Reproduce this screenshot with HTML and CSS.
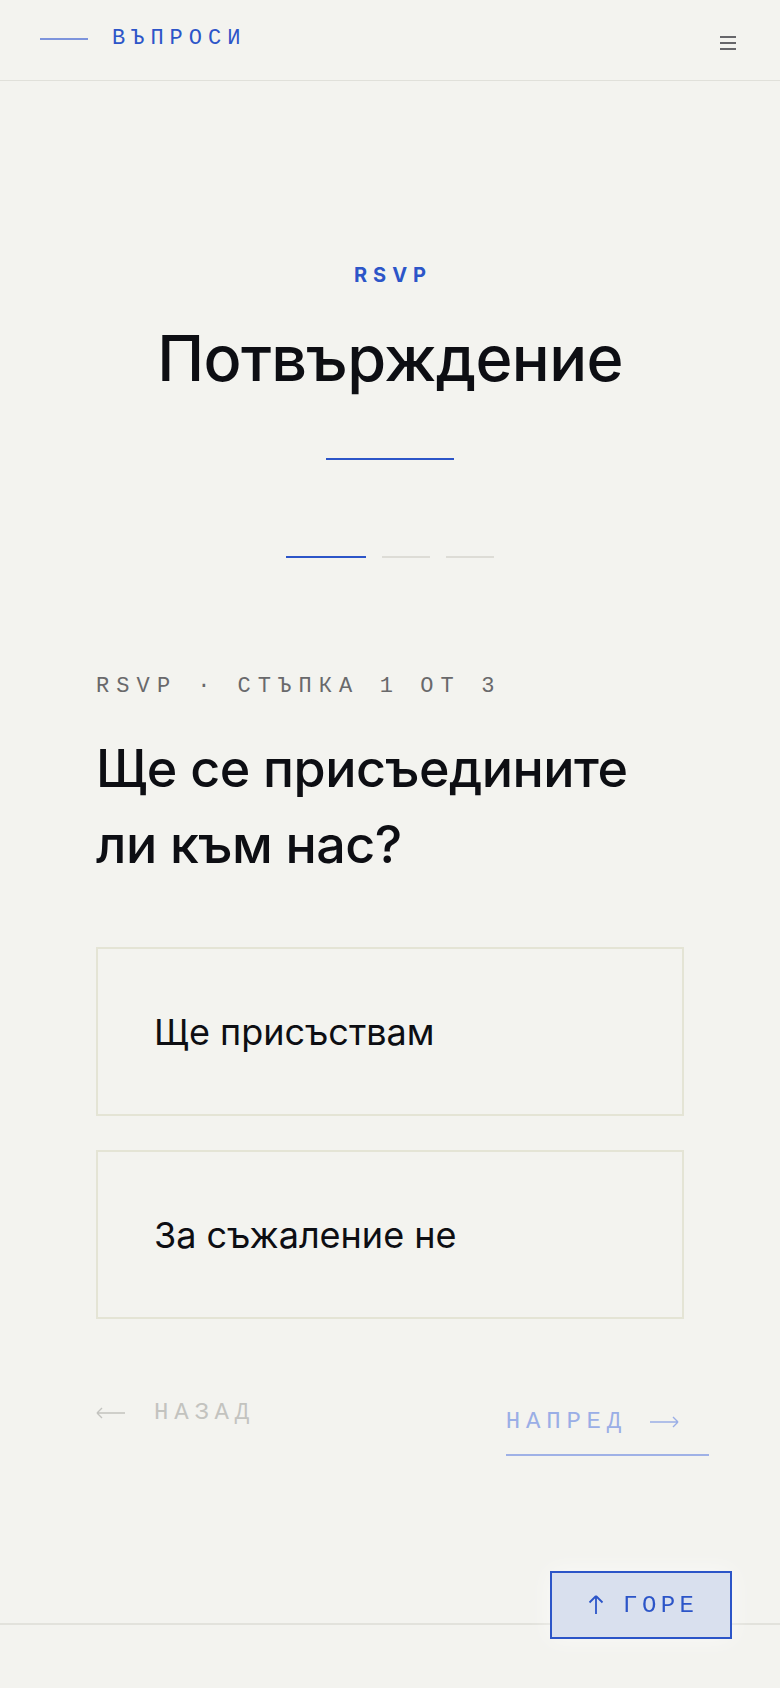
FILE: index.html
```html
<!DOCTYPE html>
<html lang="bg">
<head>
<meta charset="utf-8">
<title>RSVP</title>
<link rel="stylesheet" href="styles.css">
</head>
<body>
<header class="topbar">
  <a class="brand" href="#">
    <span class="brand-line"></span>
    <span class="brand-text">ВЪПРОСИ</span>
  </a>
  <button class="menu" aria-label="Меню">
    <span></span><span></span><span></span>
  </button>
</header>

<main class="page">
  <section class="hero">
    <div class="eyebrow">RSVP</div>
    <h1 class="title">Потвърждение</h1>
    <div class="divider"></div>
    <div class="steps">
      <span class="step active"></span>
      <span class="step"></span>
      <span class="step"></span>
    </div>
  </section>

  <section class="form">
    <div class="step-label"><span>RSVP</span><span class="sep">·</span><span>СТЪПКА 1 ОТ 3</span></div>
    <h2 class="question">Ще се присъедините<br>ли към нас?</h2>
    <div class="options">
      <button class="option">Ще присъствам</button>
      <button class="option">За съжаление не</button>
    </div>
    <div class="nav">
      <button class="nav-btn back">
        <svg class="arrow" width="30" height="12" viewBox="0 0 30 12"><path d="M1 6H29M1 6L6 1M1 6L6 11" fill="none" stroke="currentColor" stroke-width="1.4"/></svg>
        <span>НАЗАД</span>
      </button>
      <button class="nav-btn next">
        <span>НАПРЕД</span>
        <svg class="arrow" width="30" height="12" viewBox="0 0 30 12"><path d="M1 6H29M29 6L24 1M29 6L24 11" fill="none" stroke="currentColor" stroke-width="1.4"/></svg>
      </button>
    </div>
  </section>
</main>

<footer class="footer"></footer>

<button class="to-top">
  <svg width="16" height="20" viewBox="0 0 16 20"><path d="M8 19V1M8 1L1.5 7.5M8 1L14.5 7.5" fill="none" stroke="currentColor" stroke-width="1.8"/></svg>
  <span>ГОРЕ</span>
</button>
</body>
</html>
```

FILE: styles.css
```css
* { box-sizing: border-box; }

html, body {
  margin: 0;
  padding: 0;
  background: #f3f3ef;
  color: #0d0e13;
  font-family: Inter, "Noto Sans", sans-serif;
}

body {
  min-height: 1688px;
  display: flex;
  flex-direction: column;
}

button {
  font: inherit;
  background: none;
  border: 0;
  padding: 0;
  color: inherit;
  cursor: pointer;
}

.topbar {
  height: 81px;
  border-bottom: 1px solid #e0e0da;
  display: flex;
  align-items: center;
  justify-content: space-between;
  padding: 0 44px 0 40px;
}

.brand {
  display: flex;
  align-items: center;
  gap: 24px;
  text-decoration: none;
  margin-top: -2px;
}

.brand-line {
  width: 48px;
  height: 2px;
  background: #7d94dc;
}

.brand-text {
  font-family: "Liberation Mono", "DejaVu Sans Mono", monospace;
  font-size: 22px;
  letter-spacing: 6px;
  color: #2c55c8;
  line-height: 26px;
}

.menu {
  width: 16px;
  height: 14px;
  display: flex;
  flex-direction: column;
  justify-content: space-between;
  margin-top: 6px;
}

.menu span {
  display: block;
  height: 2px;
  background: #66666a;
}

.page {
  flex: 1;
}

.hero {
  padding-top: 184px;
  display: flex;
  flex-direction: column;
  align-items: center;
}

.eyebrow {
  font-size: 20px;
  line-height: 20px;
  font-weight: 700;
  letter-spacing: 0.3em;
  margin-right: -0.3em;
  color: #2c55c8;
}

.title {
  margin: 38px 0 0;
  font-size: 63px;
  line-height: 70px;
  font-weight: 500;
  letter-spacing: -0.01em;
  color: #0d0e13;
}

.divider {
  width: 128px;
  height: 2px;
  background: #2c55c8;
  margin-top: 65px;
}

.steps {
  display: flex;
  gap: 16px;
  margin-top: 96px;
}

.step {
  display: block;
  width: 48px;
  height: 2px;
  background: #dddcd6;
}

.step.active {
  width: 80px;
  background: #2c55c8;
}

.form {
  padding: 0 96px;
  margin-top: 116px;
}

.step-label {
  font-family: "Liberation Mono", "DejaVu Sans Mono", monospace;
  font-size: 22px;
  line-height: 26px;
  letter-spacing: 7.1px;
  color: #69696b;
  display: flex;
  gap: 20px;
}

.question {
  margin: 31px 0 0;
  font-size: 52px;
  line-height: 76px;
  font-weight: 500;
  letter-spacing: -0.01em;
}

.options {
  margin-top: 64px;
  display: flex;
  flex-direction: column;
  gap: 34px;
}

.option {
  height: 169px;
  border: 2px solid #e4e4d5;
  display: flex;
  align-items: center;
  padding: 0 56px;
  font-size: 36px;
  font-weight: 400;
  color: #0d0e13;
  text-align: left;
}

.nav {
  margin-top: 80px;
  margin-right: -25px;
  display: flex;
  justify-content: space-between;
  align-items: flex-start;
}

.nav-btn {
  display: flex;
  align-items: center;
  font-family: "Liberation Mono", "DejaVu Sans Mono", monospace;
  font-size: 24px;
  line-height: 28px;
  letter-spacing: 5.8px;
}

.back {
  color: #c3c3bf;
  gap: 28px;
}

.next {
  color: #9aaee6;
  gap: 22px;
  padding: 9px 30px 18px 0;
  border-bottom: 2px solid #9fb1e6;
}

.arrow {
  display: block;
}

.footer {
  height: 65px;
  border-top: 2px solid #e2e2dc;
}

.to-top {
  position: fixed;
  right: 48px;
  bottom: 49px;
  width: 182px;
  height: 68px;
  border: 2px solid #2c55c8;
  background: #d9e0ee;
  color: #2c55c8;
  display: flex;
  align-items: center;
  justify-content: center;
  gap: 19px;
  font-family: "Liberation Mono", "DejaVu Sans Mono", monospace;
  font-size: 24px;
  letter-spacing: 4.4px;
  box-shadow: 0 0 24px rgba(255, 255, 255, 0.6);
}

.to-top span {
  margin-right: -4.4px;
}
```
